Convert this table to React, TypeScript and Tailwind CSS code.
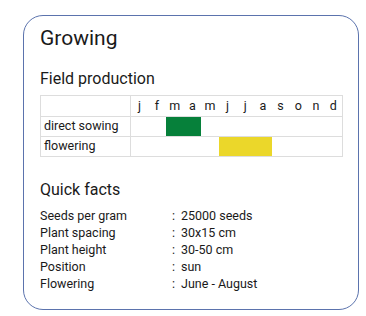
const months = ['j', 'f', 'm', 'a', 'm', 'j', 'j', 'a', 's', 'o', 'n', 'd']

const rows = [
  { label: 'direct sowing', on: [2, 3], color: 'bg-[#06803a]' },
  { label: 'flowering', on: [5, 6, 7], color: 'bg-[#ebd72a]' },
]

const facts = [
  ['Seeds per gram', '25000 seeds'],
  ['Plant spacing', '30x15 cm'],
  ['Plant height', '30-50 cm'],
  ['Position', 'sun'],
  ['Flowering', 'June - August'],
]

export default function App() {
  return (
    <div className="w-[366px] h-[316px] bg-white pt-[15px] pl-[23px] font-['Roboto',sans-serif] text-[#1a1a1a]">
      <div className="w-[336px] h-[295px] border border-[#5b73ad] rounded-[20px] px-4 pt-[8px]">
        <h2 className="text-[21px] leading-[28px]">Growing</h2>

        <h3 className="mt-[17px] text-[16px] leading-[20px]">Field production</h3>
        <table className="mt-[6px] w-[303px] border-collapse table-fixed text-[12.5px]">
          <colgroup>
            <col className="w-[90px]" />
            {months.map((_, i) => (
              <col key={i} />
            ))}
          </colgroup>
          <thead>
            <tr className="h-[21px]">
              <th className="border border-[#dddddd]" />
              {months.map((m, i) => (
                <th key={i} className="border-y border-[#dddddd] font-normal text-center leading-none last:border-r">
                  {m}
                </th>
              ))}
            </tr>
          </thead>
          <tbody>
            {rows.map((r) => (
              <tr key={r.label} className="h-[20px]">
                <td className="border border-[#dddddd] pl-[3px] leading-none">{r.label}</td>
                {months.map((_, i) => (
                  <td
                    key={i}
                    className={`p-0 border-y border-[#dddddd] last:border-r ${r.on.includes(i) ? r.color : ''}`}
                  />
                ))}
              </tr>
            ))}
          </tbody>
        </table>

        <h3 className="mt-[23px] text-[16px] leading-[20px]">Quick facts</h3>
        <div className="mt-[7px] grid grid-cols-[132px_9px_1fr] text-[12.5px] leading-[17px]">
          {facts.map(([k, v]) => (
            <div key={k} className="contents">
              <span>{k}</span>
              <span>:</span>
              <span>{v}</span>
            </div>
          ))}
        </div>
      </div>
    </div>
  )
}
